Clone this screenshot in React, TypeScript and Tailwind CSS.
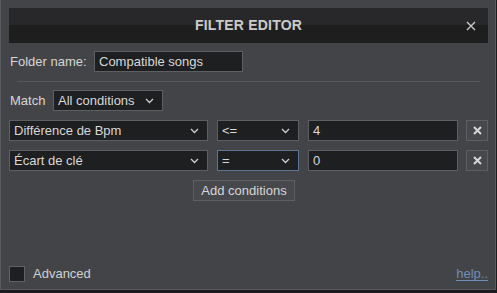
import React from "react";

const Chevron = () => (
  <svg width="9" height="6" viewBox="0 0 9 6" className="shrink-0">
    <path d="M1 1 L4.5 4.5 L8 1" fill="none" stroke="#cfcfcf" strokeWidth="1.3" />
  </svg>
);

const Select = ({ text, className, focus }: { text: string; className: string; focus?: boolean }) => (
  <div
    className={`h-[21px] flex items-center justify-between pl-[4px] pr-[8px] bg-[#1e1f21] border ${
      focus ? "border-[#5d7594]" : "border-[#5e5f63]"
    } text-[#d8d8d8] text-[13px] ${className}`}
  >
    <span className="leading-none">{text}</span>
    <Chevron />
  </div>
);

const DelBtn = () => (
  <div className="w-[22px] h-[21px] flex items-center justify-center bg-[#47484c] border border-[#5e5f63]">
    <svg width="9" height="9" viewBox="0 0 9 9">
      <path d="M1 1 L8 8 M8 1 L1 8" stroke="#d6d6d6" strokeWidth="2" />
    </svg>
  </div>
);

export default function App() {
  return (
    <div className="w-[497px] h-[293px] bg-[#1c1c1d] overflow-hidden font-['Liberation_Sans',Arial,sans-serif]">
      <div className="w-[496px] h-[290px] bg-[#434448] border-l border-r border-b border-[#595a5e] pl-[8px] pr-[7px] pt-[8px] flex flex-col">
        <div className="h-[35px] flex items-center relative bg-[linear-gradient(to_bottom,#28282a_50%,#1e1e1f_50%)]">
          <div className="flex-1 text-center text-[14px] font-bold text-[#cbcbcb] tracking-[0.2px]">FILTER EDITOR</div>
          <div className="absolute right-[12px] top-[13px]">
            <svg width="10" height="10" viewBox="0 0 10 10">
              <path d="M1 1 L9 9 M9 1 L1 9" stroke="#c8c8c8" strokeWidth="1.4" />
            </svg>
          </div>
        </div>

        <div className="mt-[8px] flex items-center h-[21px]">
          <span className="pl-[1px] w-[85px] text-[13px] text-[#d6d6d6]">Folder name:</span>
          <div className="w-[149px] h-[21px] bg-[#1e1f21] border border-[#5e5f63] flex items-center pl-[4px] text-[13px] text-[#d8d8d8]">
            Compatible songs
          </div>
        </div>

        <div className="mt-[9px] ml-[8px] mr-[8px] h-[1px] bg-[#58595d]" />

        <div className="mt-[8px] flex items-center h-[21px]">
          <span className="pl-[1px] w-[44px] text-[13px] text-[#d6d6d6]">Match</span>
          <Select text="All conditions" className="w-[110px]" />
        </div>

        <div className="mt-[9px] flex items-center">
          <Select text="Différence de Bpm" className="w-[199px]" />
          <Select text="<=" className="w-[82px] ml-[9px]" />
          <div className="w-[150px] ml-[9px] h-[21px] bg-[#1e1f21] border border-[#5e5f63] flex items-center pl-[4px] text-[13px] text-[#d8d8d8]">
            4
          </div>
          <div className="ml-[8px]">
            <DelBtn />
          </div>
        </div>

        <div className="mt-[9px] flex items-center">
          <Select text="Écart de clé" className="w-[199px]" />
          <Select text="=" className="w-[82px] ml-[9px]" focus />
          <div className="w-[150px] ml-[9px] h-[21px] bg-[#1e1f21] border border-[#5e5f63] flex items-center pl-[4px] text-[13px] text-[#d8d8d8]">
            0
          </div>
          <div className="ml-[8px]">
            <DelBtn />
          </div>
        </div>

        <div className="mt-[9px] flex justify-start">
          <div className="ml-[184px] w-[102px] h-[21px] bg-[#47484c] border border-[#5e5f63] flex items-center justify-center text-[13px] text-[#d6d6d6]">
            Add conditions
          </div>
        </div>

        <div className="flex-1" />

        <div className="flex items-center justify-between mb-[7px] h-[16px]">
          <div className="flex items-center">
            <div className="w-[16px] h-[16px] bg-[#1e1f21] border border-[#616266]" />
            <span className="ml-[8px] text-[13px] text-[#d0d0d0]">Advanced</span>
          </div>
          <span className="text-[13px] text-[#6d8eb8] border-b border-[#6d8eb8] leading-[13px] mr-[0px]">help..</span>
        </div>
      </div>
    </div>
  );
}
